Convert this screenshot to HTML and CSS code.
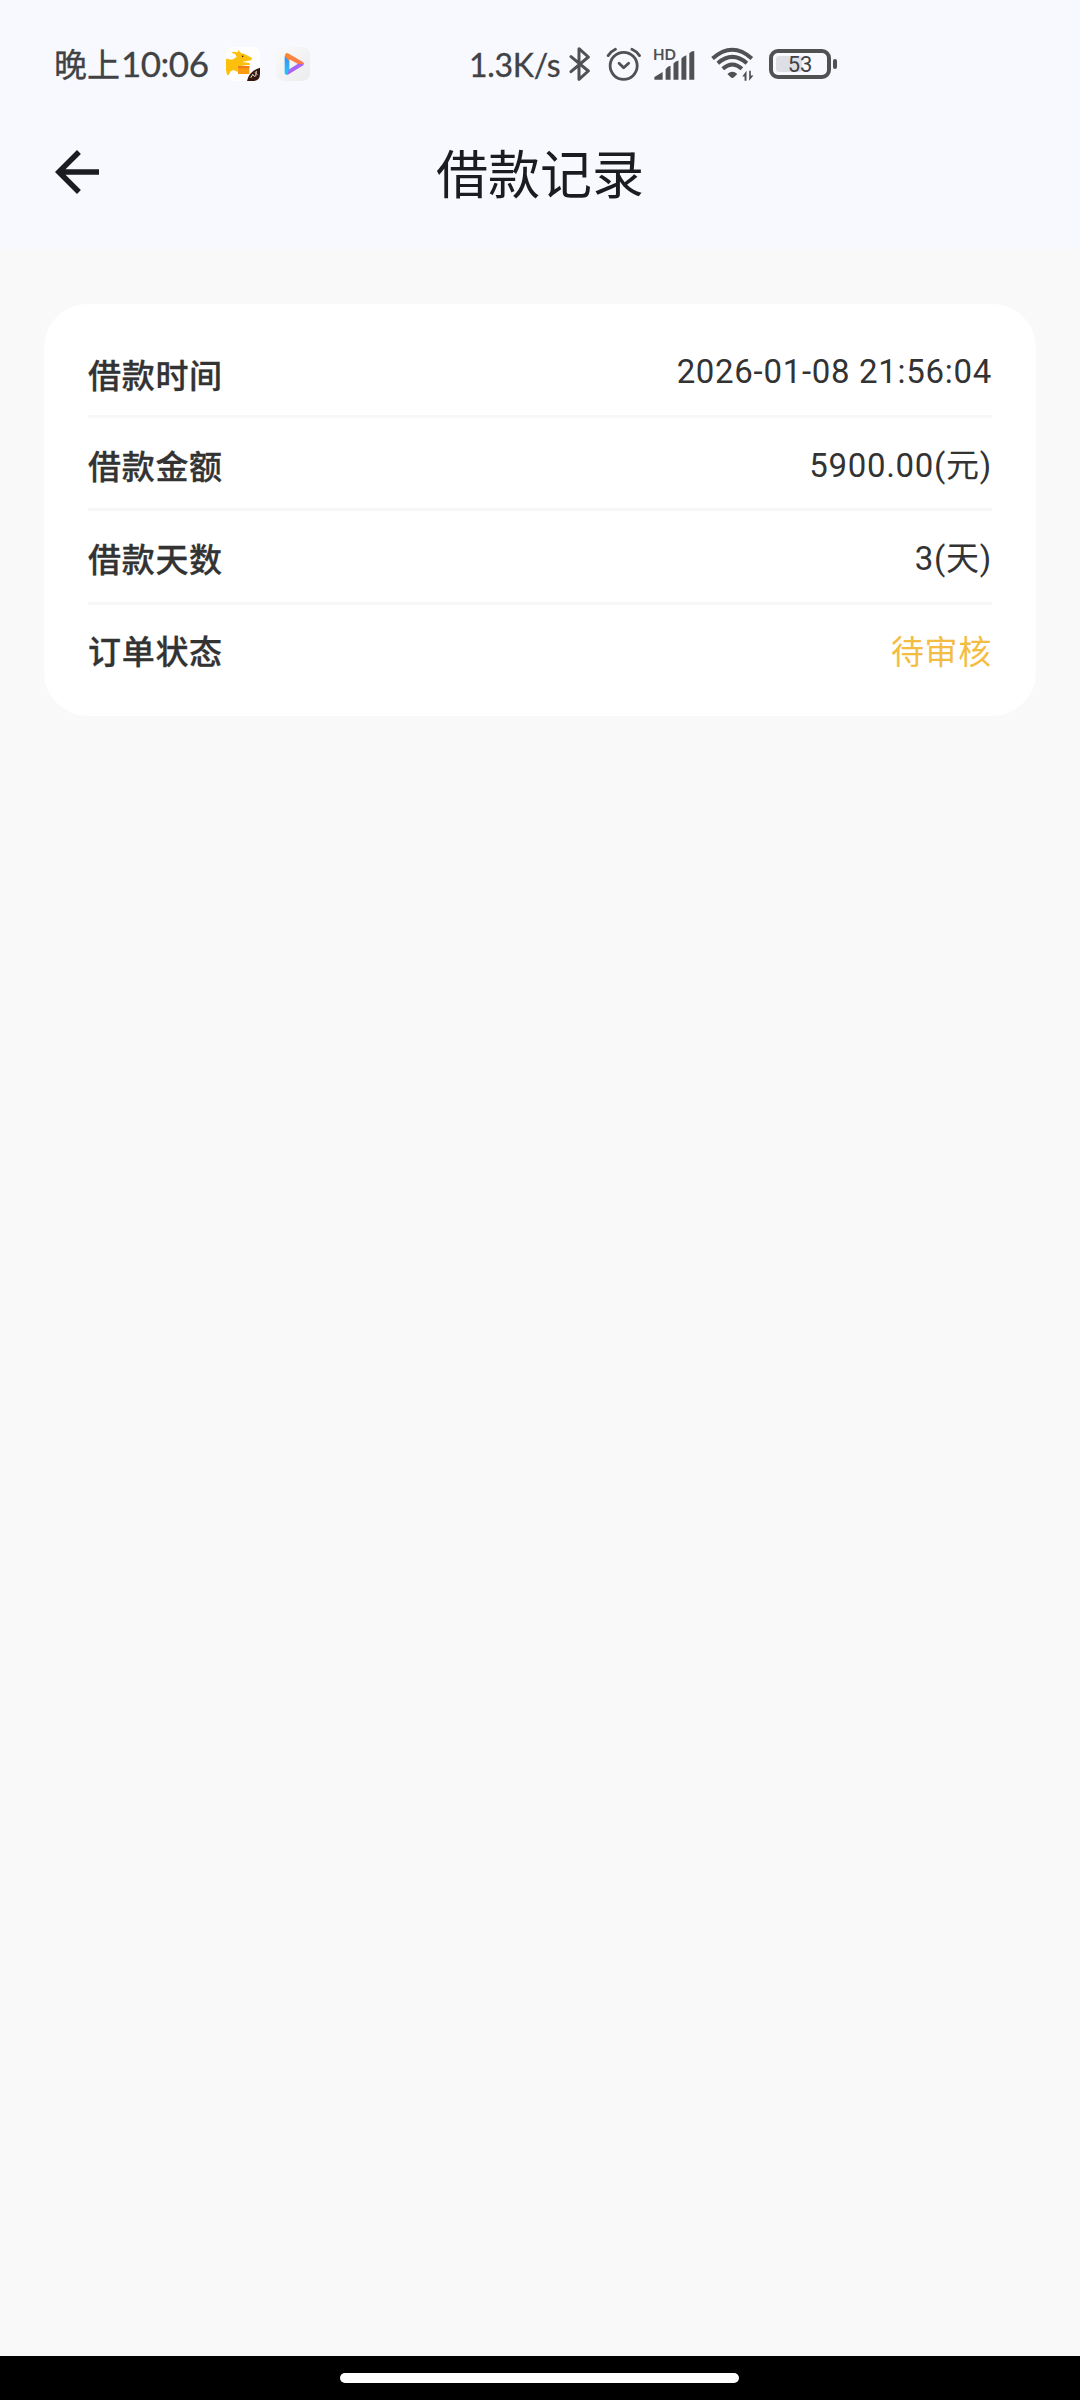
FILE: index.html
```html
<!DOCTYPE html>
<html lang="zh-CN">
<head>
    <meta charset="UTF-8">
    <meta name="viewport" content="width=device-width, initial-scale=1.0">
    <title>借款记录</title>
    <link rel="stylesheet" href="styles.css">
</head>
<body>
    <div class="screen">
        <div class="status-bar">
            <span class="clock">晚上<span class="digits">10:06</span></span>
            <svg class="app-icon" viewBox="0 0 102 102">
                <rect width="102" height="102" rx="22" fill="#fff"/>
                <path d="M0 35 18 38 32 30 28 22 17 17 20 14 35 16 37 9 45 18 57 22 78 33 76 40 60 42 49 45 70 48 73 53 46 56 36 60 35 75 23 69 14 73 8 84 3 84 0 70Z" fill="#fbbf0c"/>
                <path d="M36 57H70V81H36Z" fill="#fb9c10"/>
                <path d="M36 57H70V64H36Z" fill="#f47b16"/>
                <circle cx="50" cy="28" r="2.5" fill="#3b2410"/>
                <path d="M102 62V80Q102 102 80 102H63Q69 72 102 62Z" fill="#35190f"/>
                <path d="M74 93 81 81M80 83 87 89M87 76 94 83M91 72 89 88" stroke="#e8dcd4" stroke-width="3"/>
            </svg>
            <svg class="app-icon second" viewBox="0 0 102 102">
                <defs>
                    <linearGradient id="plate" x1="0" y1="0" x2="1" y2="1">
                        <stop offset="0" stop-color="#fafafa"/>
                        <stop offset="1" stop-color="#ececed"/>
                    </linearGradient>
                    <linearGradient id="left" x1="0" y1="0" x2="0" y2="1">
                        <stop offset="0" stop-color="#3b8cf5"/>
                        <stop offset="1" stop-color="#27c9f7"/>
                    </linearGradient>
                    <linearGradient id="top" x1="0" y1="0" x2="1" y2="1">
                        <stop offset="0" stop-color="#ff8a2b"/>
                        <stop offset="1" stop-color="#f8795a"/>
                    </linearGradient>
                </defs>
                <rect width="102" height="102" rx="22" fill="url(#plate)"/>
                <path d="M26 27 40 32V74L32 84 26 80Z" fill="url(#left)"/>
                <path d="M32 84 40 67 66 50 84 49 82 55 38 82Z" fill="#a963f5"/>
                <path d="M26 27 30 18 36 19 82 46 84 51 66 51 40 37 39 42Z" fill="url(#top)"/>
            </svg>
            <span class="speed">1.3K/s</span>
            <svg class="bluetooth" viewBox="357 50 63 102">
                <path d="M363 79 415 122 387 147V55L415 80 363 124" fill="none" stroke="#505153" stroke-width="9" stroke-linejoin="round" stroke-linecap="round"/>
            </svg>
            <svg class="alarm" viewBox="468 50 105 103">
                <g fill="none" stroke="#505153" stroke-width="8.5" stroke-linecap="round">
                    <circle cx="521" cy="107" r="41"/>
                    <path d="M507 99 521 113 536 99" stroke-linejoin="round"/>
                    <path d="M474 76Q483 63 496 57M546 57Q560 63 569 76"/>
                </g>
            </svg>
            <span class="signal">
                <svg viewBox="44 57 122 88">
                    <path d="M44 144V136L69 121V144ZM78 144V112Q84 103 93 102V144ZM102 144V95Q108 88 117 86V144ZM126 144V80Q132 73 141 70V144ZM150 144V64Q156 57 165 57V144Z" fill="#505153"/>
                </svg>
                <span class="hd">HD</span>
            </span>
            <svg class="wifi" viewBox="213 54 129 103">
                <g fill="none" stroke="#505153" stroke-width="12">
                    <path d="M217 89Q277 36 336 89"/>
                    <path d="M233 103Q277 65 321 103"/>
                    <path d="M248 120Q277 94 306 120"/>
                </g>
                <path d="M262 136Q277 122 292 136L282 146Q277 150 272 146Z" fill="#505153"/>
                <path d="M320 126V156H314V143H307ZM328 156V126H333V140H341Z" fill="#505153"/>
            </svg>
            <span class="battery">
                <span class="battery-body"><span class="battery-level"></span><span class="battery-text">53</span></span>
                <span class="battery-tip"></span>
            </span>
        </div>
        <div class="header">
            <svg class="back" viewBox="0 0 24 24">
                <path d="M20 11H7.83l5.59-5.59L12 4l-8 8 8 8 1.41-1.41L7.83 13H20z" fill="#1a1c20"/>
            </svg>
            <h1>借款记录</h1>
        </div>
        <div class="content">
            <div class="card">
                <div class="row">
                    <span class="label">借款时间</span>
                    <span class="value">2026-01-08 21:56:04</span>
                </div>
                <div class="row">
                    <span class="label">借款金额</span>
                    <span class="value">5900.00(元)</span>
                </div>
                <div class="row">
                    <span class="label">借款天数</span>
                    <span class="value">3(天)</span>
                </div>
                <div class="row">
                    <span class="label">订单状态</span>
                    <span class="value pending">待审核</span>
                </div>
            </div>
        </div>
        <div class="nav-bar">
            <div class="handle"></div>
        </div>
    </div>
</body>
</html>
```

FILE: styles.css
```css
* {
    margin: 0;
    padding: 0;
    box-sizing: border-box;
}
body {
    font-family: Roboto, "Noto Sans CJK SC", sans-serif;
    background-color: #f9f9f9;
    color: #333333;
}
svg {
    display: block;
    flex-shrink: 0;
}
.screen {
    width: 1080px;
    height: 2400px;
    display: flex;
    flex-direction: column;
}

/* Status bar */
.status-bar {
    height: 128px;
    padding-left: 54px;
    display: flex;
    align-items: center;
    background-color: #f8f9ff;
    color: #414244;
    white-space: nowrap;
}
.clock {
    width: 172px;
    font-family: "Noto Sans CJK SC", sans-serif;
    font-size: 33px;
    line-height: 46px;
    padding-bottom: 2px;
    -webkit-text-stroke: 0.3px #414244;
}
.digits {
    margin-left: 1px;
    font-family: Lato, sans-serif;
    font-size: 35px;
    letter-spacing: -0.5px;
}
.app-icon {
    width: 34px;
    height: 34px;
}
.app-icon.second {
    margin-left: 16px;
}
.speed {
    width: 100px;
    margin-left: 159px;
    font-family: Lato, sans-serif;
    font-size: 32px;
    letter-spacing: -0.3px;
    -webkit-text-stroke: 0.3px #414244;
}
.bluetooth {
    width: 21px;
    height: 34px;
}
.alarm {
    width: 35px;
    height: 34px;
    margin-left: 16px;
}
.signal {
    position: relative;
    margin-left: 13px;
    padding-top: 3px;
}
.signal svg {
    width: 41px;
    height: 29px;
}
.hd {
    position: absolute;
    left: -1px;
    top: -2px;
    font-family: Lato, sans-serif;
    font-size: 15px;
    font-weight: bold;
    line-height: 16px;
    color: #505153;
}
.wifi {
    width: 43px;
    height: 34px;
    margin-left: 16px;
}
.battery {
    margin-left: 15px;
    display: flex;
    align-items: center;
    gap: 2px;
}
.battery-body {
    position: relative;
    width: 62px;
    height: 30px;
    border: 4px solid #505153;
    border-radius: 9px;
    display: flex;
    align-items: center;
    justify-content: center;
}
.battery-level {
    position: absolute;
    left: 3px;
    top: 3px;
    width: 26px;
    height: 16px;
    border-radius: 3px;
    background-color: #dedfe4;
}
.battery-text {
    position: relative;
    padding-top: 2px;
    font-size: 22px;
    line-height: 22px;
}
.battery-tip {
    width: 4px;
    height: 10px;
    border-radius: 2px;
    background-color: #505153;
}

/* Title bar */
.header {
    height: 121px;
    padding: 11px 44px 0;
    display: grid;
    grid-template-columns: 66px 1fr 66px;
    align-items: start;
    background-color: #f8f9ff;
}
.back {
    width: 66px;
    height: 66px;
}
.header h1 {
    padding-top: 5px;
    font-size: 52px;
    font-weight: 400;
    line-height: 66px;
    text-align: center;
    color: #1a1c20;
}

/* Record card */
.content {
    flex: 1;
    padding: 55px 44px;
}
.card {
    height: 412px;
    padding: 20px 44px 0;
    background-color: #ffffff;
    border-radius: 44px;
}
.row {
    height: 93.6px;
    display: flex;
    align-items: center;
    justify-content: space-between;
    border-bottom: 3px solid #f7f7f7;
    font-size: 33px;
    letter-spacing: 0.7px;
}
.row:first-child {
    padding-top: 5px;
}
.row:last-child {
    height: 90px;
    border-bottom: none;
}
.label {
    padding-top: 4px;
    font-family: "Noto Sans CJK SC", sans-serif;
    font-weight: 500;
    -webkit-text-stroke: 0.3px #333333;
}
.row:last-child .label {
    padding-top: 0;
}
.pending {
    color: #f3bd43;
}

/* Gesture bar */
.nav-bar {
    height: 44px;
    padding-top: 17px;
    background-color: #000000;
}
.handle {
    width: 399px;
    height: 10px;
    margin-left: 340px;
    border-radius: 5px;
    background-color: #ffffff;
}
```
